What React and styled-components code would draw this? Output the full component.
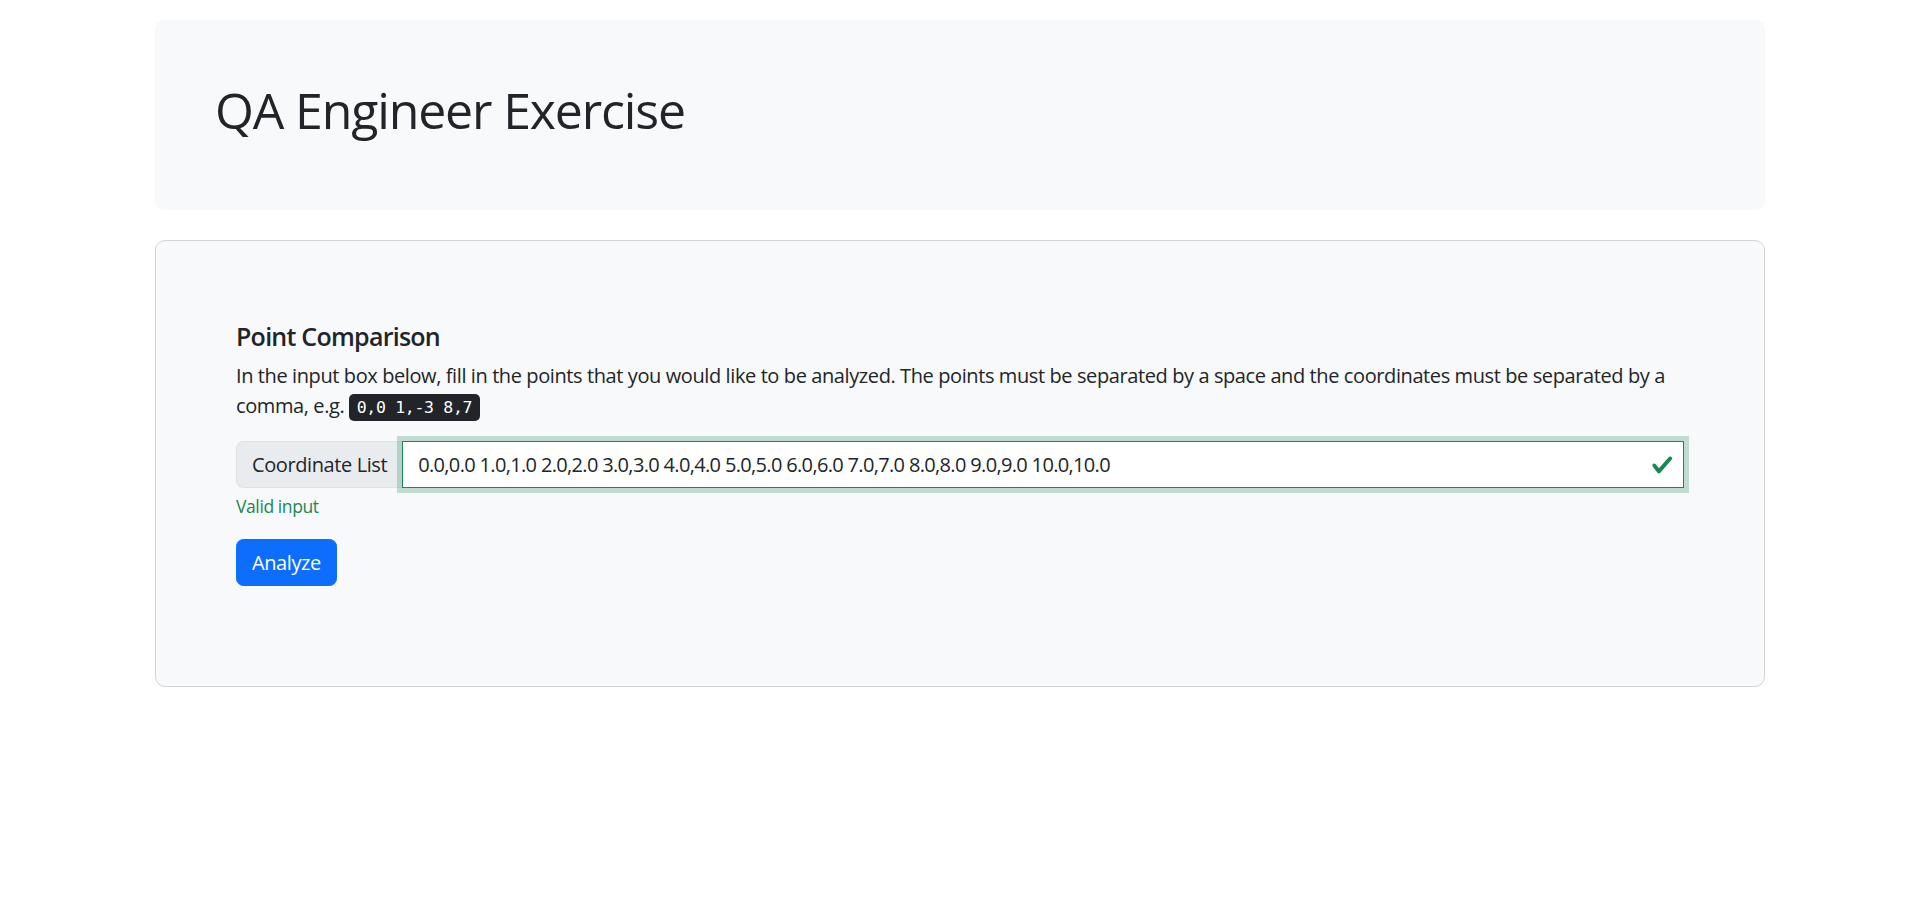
import React from 'react';
import styled, { createGlobalStyle } from 'styled-components';

const GlobalStyle = createGlobalStyle`
  *, *::before, *::after { box-sizing: border-box; }
  body {
    margin: 0;
    background: #fff;
    color: #212529;
    font-family: "Segoe UI", "Open Sans", "Noto Sans", sans-serif;
    font-size: 20px;
    line-height: 1.5;
    letter-spacing: -0.02em;
  }
`;

const Container = styled.div`
  width: 1610px;
  margin: 0 auto;
  padding-top: 20px;
`;

const Hero = styled.header`
  background: #f8f9fa;
  border-radius: 10px;
  padding: 60px;
  margin-bottom: 30px;
`;

const Title = styled.h1`
  margin: 0 0 10px;
  font-size: 50px;
  font-weight: 500;
  line-height: 1.2;
  letter-spacing: -0.023em;
`;

const Card = styled.section`
  background: #f8f9fa;
  border: 1px solid #d3d4d5;
  border-radius: 10px;
  padding: 80px;
`;

const Heading = styled.h5`
  margin: 0 0 10px;
  font-size: 25px;
  font-weight: 600;
  line-height: 1.2;
  letter-spacing: -0.03em;
`;

const Text = styled.p`
  margin: 0 0 20px;
`;

const Kbd = styled.kbd`
  background: #212529;
  color: #fff;
  border-radius: 5px;
  padding: 4px 7.5px;
  font-family: "DejaVu Sans Mono", "Liberation Mono", monospace;
  font-size: 16.5px;
  letter-spacing: -0.3px;
`;

const InputGroup = styled.div`
  display: flex;
  align-items: stretch;
  width: 100%;
`;

const Addon = styled.span`
  display: flex;
  align-items: center;
  padding: 7.5px 15px;
  background: #e9ecef;
  border: 1px solid #dee2e6;
  border-right: 0;
  border-radius: 7.5px 0 0 7.5px;
  white-space: nowrap;
`;

const Field = styled.div`
  position: relative;
  flex: 1;
  display: flex;
`;

const Input = styled.input`
  flex: 1;
  min-width: 0;
  font: inherit;
  letter-spacing: -0.033em;
  color: #212529;
  background: #fff;
  padding: 7.5px 47px 7.5px 15px;
  border: 1px solid ${p => (p.$valid ? '#198754' : '#dee2e6')};
  box-shadow: ${p => (p.$valid ? '0 0 0 5px rgba(25,135,84,.25)' : 'none')};
  border-radius: 0;
  outline: none;
`;

const ValidIcon = styled.svg`
  position: absolute;
  right: 11px;
  top: 50%;
  width: 22.5px;
  height: 22.5px;
  transform: translateY(-50%);
`;

const Feedback = styled.div`
  margin-top: 5px;
  font-size: 17.5px;
  color: #198754;
`;

const Button = styled.button`
  margin-top: 20px;
  margin-bottom: 20px;
  font: inherit;
  letter-spacing: inherit;
  color: #fff;
  background: #0d6efd;
  border: 1px solid #0d6efd;
  border-radius: 7.5px;
  padding: 7.5px 15px;
  cursor: pointer;
`;

const coords = '0.0,0.0 1.0,1.0 2.0,2.0 3.0,3.0 4.0,4.0 5.0,5.0 6.0,6.0 7.0,7.0 8.0,8.0 9.0,9.0 10.0,10.0';

export default function App() {
  return (
    <>
      <GlobalStyle />
      <Container>
        <Hero>
          <Title>QA Engineer Exercise</Title>
        </Hero>
        <Card>
          <Heading>Point Comparison</Heading>
          <Text>
            In the input box below, fill in the points that you would like to be analyzed. The points must be
            separated by a space and the coordinates must be separated by a comma, e.g. <Kbd>0,0 1,-3 8,7</Kbd>
          </Text>
          <InputGroup>
            <Addon>Coordinate List</Addon>
            <Field>
              <Input $valid type="text" value={coords} readOnly />
              <ValidIcon viewBox="0 0 8 8">
                <path
                  fill="#198754"
                  d="M2.3 6.73.6 4.53c-.4-1.04.46-1.4 1.1-.8l1.1 1.4 3.4-3.8c.6-.63 1.6-.27 1.2.7l-4 4.6c-.43.5-.8.4-1.1.1z"
                />
              </ValidIcon>
            </Field>
          </InputGroup>
          <Feedback>Valid input</Feedback>
          <Button>Analyze</Button>
        </Card>
      </Container>
    </>
  );
}
